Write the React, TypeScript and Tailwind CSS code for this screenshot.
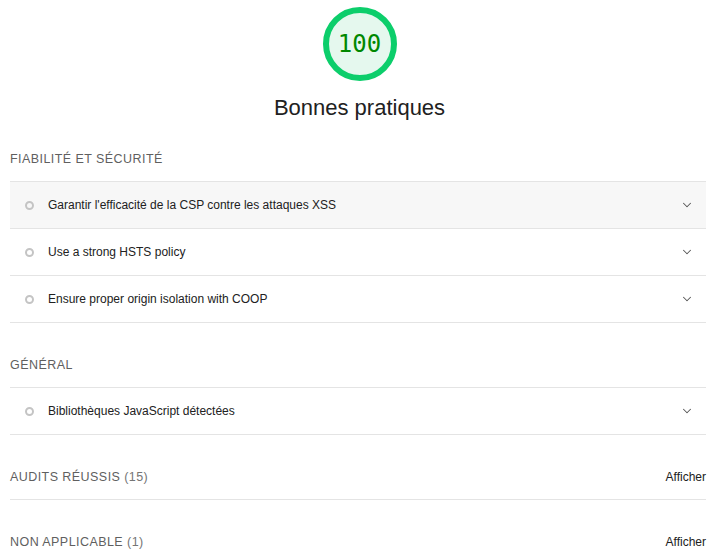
import { ChevronDown } from "lucide-react";

const FONT = { fontFamily: "'Liberation Sans', Arial, sans-serif" };

function Gauge() {
  return (
    <div className="relative w-[76px] h-[76px]">
      <svg width="76" height="76" viewBox="0 0 76 76" className="absolute inset-0">
        <circle cx="38" cy="38" r="34" fill="#e5f8ee" stroke="#0cce6b" strokeWidth="6" />
      </svg>
      <div
        className="absolute inset-0 flex items-center justify-center text-[24px] text-[#008800]"
        style={{ fontFamily: "'DejaVu Sans Mono', 'Liberation Mono', monospace" }}
      >
        100
      </div>
    </div>
  );
}

function Row({ label, shaded }: { label: string; shaded?: boolean }) {
  return (
    <div
      className={`flex items-center h-[47px] border-b border-[#e4e4e4] ${
        shaded ? "bg-[#f7f7f7]" : ""
      }`}
    >
      <span className="ml-[15px] w-[9px] h-[9px] rounded-full border-2 border-[#c4c4c4]" />
      <span className="ml-[14px] flex-1 text-[12px] text-[#212121]">{label}</span>
      <ChevronDown className="mr-[12px] w-[14px] h-[14px] text-[#555]" strokeWidth={1.75} />
    </div>
  );
}

function GroupTitle({ text, count }: { text: string; count?: string }) {
  return (
    <div className="text-[12.5px] leading-[16px] tracking-[0.035em] text-[#5f5f5f] uppercase">
      {text}
      {count && <span className="text-[#757575]"> {count}</span>}
    </div>
  );
}

function Collapsed({ text, count, last }: { text: string; count: string; last?: boolean }) {
  return (
    <div
      className={`flex items-center justify-between pt-[34px] pb-[14px] ${
        last ? "" : "border-b border-[#e4e4e4]"
      }`}
    >
      <GroupTitle text={text} count={count} />
      <span className="text-[12px] leading-[16px] text-[#212121]">Afficher</span>
    </div>
  );
}

export default function App() {
  return (
    <div className="w-[719px] h-[553px] overflow-hidden bg-white" style={FONT}>
      <div className="flex flex-col items-center pt-[6px]">
        <Gauge />
        <div className="mt-[12px] text-[22px] leading-[28px] text-[#212121]">Bonnes pratiques</div>
      </div>
      <div className="pl-[10px] pr-[13px]">
        <div className="pt-[29px] pb-[14px]">
          <GroupTitle text="Fiabilité et sécurité" />
        </div>
        <div className="border-t border-[#e4e4e4]">
          <Row label="Garantir l'efficacité de la CSP contre les attaques XSS" shaded />
          <Row label="Use a strong HSTS policy" />
          <Row label="Ensure proper origin isolation with COOP" />
        </div>
        <div className="pt-[34px] pb-[14px]">
          <GroupTitle text="Général" />
        </div>
        <div className="border-t border-[#e4e4e4]">
          <Row label="Bibliothèques JavaScript détectées" />
        </div>
        <Collapsed text="Audits réussis" count="(15)" />
        <Collapsed text="Non applicable" count="(1)" last />
      </div>
    </div>
  );
}
